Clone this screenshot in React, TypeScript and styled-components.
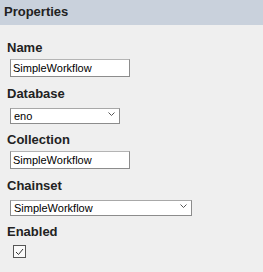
import styled, { createGlobalStyle } from "styled-components";

const GlobalStyle = createGlobalStyle`
  html, body {
    margin: 0;
    padding: 0;
    background: #efefef;
  }
  body {
    font-family: "Liberation Sans", Arial, sans-serif;
  }
`;

const Panel = styled.div`
  width: 263px;
  height: 272px;
  background: #efefef;
  overflow: hidden;
`;

const Header = styled.div`
  height: 25px;
  background: #c9d1dc;
  padding-left: 4px;
  font-size: 13px;
  font-weight: bold;
  line-height: 23px;
  color: #222;
`;

const Body = styled.div`
  padding: 15px 0 0 7px;
`;

const Field = styled.div`
  display: flex;
  flex-direction: column;
  align-items: flex-start;
  height: 46px;
`;

const Label = styled.label`
  font-size: 13px;
  font-weight: bold;
  line-height: 15px;
  color: #222;
`;

const TextInput = styled.input`
  box-sizing: border-box;
  margin: 4px 0 0 3px;
  width: 120px;
  height: 18px;
  padding: 0 2px;
  border: 1px solid #8c8c8c;
  border-top-color: #b4b4b4;
  background: #fff;
  font-family: "Liberation Sans", Arial, sans-serif;
  font-size: 11px;
  color: #000;
  outline: none;
`;

const SelectWrap = styled.div<{ $width: number }>`
  position: relative;
  margin: 5px 0 0 3px;
  width: ${(p) => p.$width}px;
  height: 16px;
`;

const Select = styled.select`
  box-sizing: border-box;
  appearance: none;
  width: 100%;
  height: 100%;
  margin: 0;
  padding: 0 14px 0 3px;
  border: 1px solid #8c8c8c;
  border-top-color: #a8a8a8;
  border-radius: 0;
  background: #fff;
  font-family: "Liberation Sans", Arial, sans-serif;
  font-size: 11px;
  color: #000;
  outline: none;
`;

const Chevron = styled.svg`
  position: absolute;
  right: 5px;
  top: 6px;
  pointer-events: none;
`;

const Check = styled.span`
  box-sizing: border-box;
  display: flex;
  align-items: center;
  justify-content: center;
  margin: 6px 0 0 6px;
  width: 13px;
  height: 13px;
  border: 1px solid #555;
  background: #fafafa;
`;

function Dropdown({ value, width }: { value: string; width: number }) {
  return (
    <SelectWrap $width={width}>
      <Select defaultValue={value}>
        <option>{value}</option>
      </Select>
      <Chevron width="7" height="4" viewBox="0 0 7 4">
        <path d="M0.5 0.5 L3.5 3.5 L6.5 0.5" fill="none" stroke="#555" strokeWidth="1" />
      </Chevron>
    </SelectWrap>
  );
}

export default function App() {
  return (
    <>
      <GlobalStyle />
      <Panel>
        <Header>Properties</Header>
        <Body>
          <Field>
            <Label>Name</Label>
            <TextInput defaultValue="SimpleWorkflow" />
          </Field>
          <Field>
            <Label>Database</Label>
            <Dropdown value="eno" width={110} />
          </Field>
          <Field>
            <Label>Collection</Label>
            <TextInput defaultValue="SimpleWorkflow" />
          </Field>
          <Field>
            <Label>Chainset</Label>
            <Dropdown value="SimpleWorkflow" width={182} />
          </Field>
          <Field>
            <Label>Enabled</Label>
            <Check>
              <svg width="9" height="8" viewBox="0 0 9 8">
                <path d="M1 4 L3.5 6.5 L8 1" fill="none" stroke="#333" strokeWidth="1" />
              </svg>
            </Check>
          </Field>
        </Body>
      </Panel>
    </>
  );
}
